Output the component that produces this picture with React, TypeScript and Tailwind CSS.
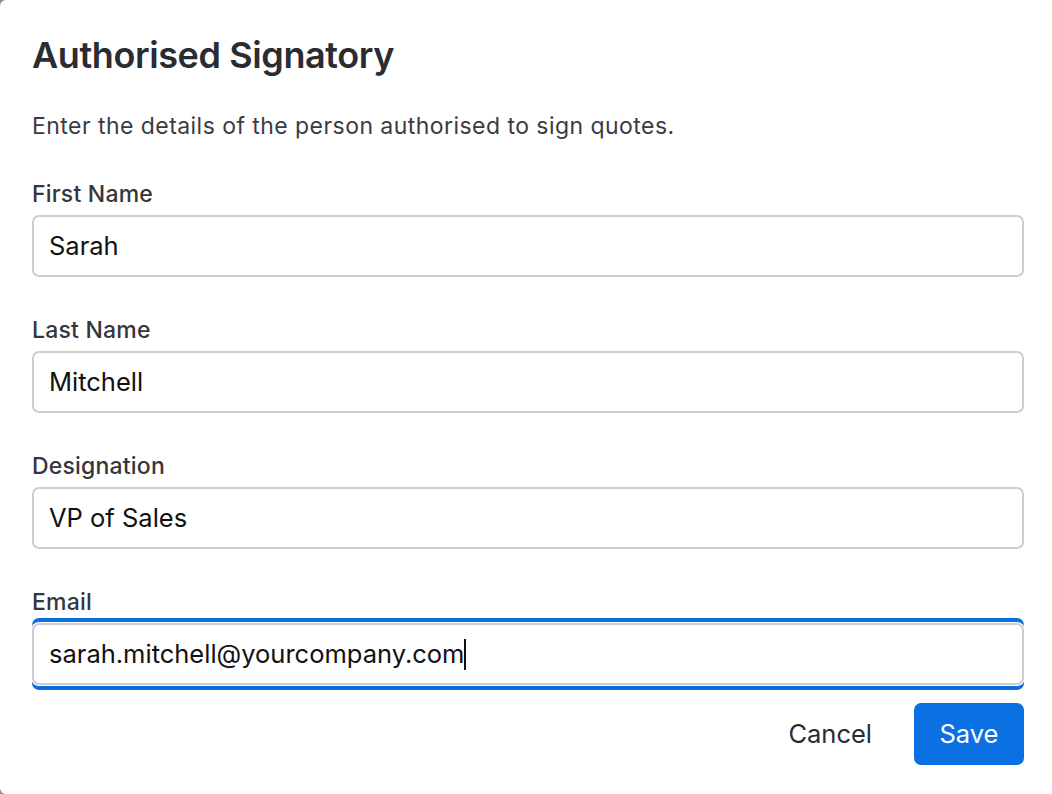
import React from 'react'

const font = { fontFamily: 'Inter, "Noto Sans", sans-serif' }

interface FieldProps {
  label: string
  value: string
  focused?: boolean
}

function Field({ label, value, focused }: FieldProps) {
  return (
    <div className="flex flex-col">
      <label className="text-[23px] leading-[28px] font-medium tracking-[0.2px] text-[#34363c] mb-[7px]">{label}</label>
      <div
        className={`h-[62px] rounded-[7px] border-2 border-[#cdced1] bg-white flex items-center pl-[15px] text-[25.5px] text-[#111] ${
          focused ? 'shadow-[0_0_0_1px_#ffffff,0_-5px_0_0_#0b6fe0,0_5px_0_0_#0b6fe0]' : ''
        }`}
      >
        <span>{value}</span>
        {focused && <span className="w-[2px] h-[31px] bg-[#111]" />}
      </div>
    </div>
  )
}

export default function App() {
  return (
    <div className="w-full h-[794px] bg-[#8e8e8e]" style={font}>
      <div className="h-full bg-white rounded-l-[6px] pl-[32px] pr-[28px] pt-[31px] flex flex-col">
        <h1 className="text-[36px] leading-[48px] font-semibold text-[#2a2c32] tracking-[-0.4px]">
          Authorised Signatory
        </h1>
        <p className="mt-[33px] text-[23px] leading-[28px] tracking-[0.45px] text-[#3a3c42]">
          Enter the details of the person authorised to sign quotes.
        </p>
        <div className="mt-[40px] flex flex-col gap-[39px]">
          <Field label="First Name" value="Sarah" />
          <Field label="Last Name" value="Mitchell" />
          <Field label="Designation" value="VP of Sales" />
          <Field label="Email" value="sarah.mitchell@yourcompany.com" focused />
        </div>
        <div className="mt-[18px] flex justify-end items-center gap-[18px]">
          <button className="h-[62px] px-[24px] text-[25.5px] text-[#2a2c32]">Cancel</button>
          <button className="h-[62px] w-[110px] rounded-[7px] bg-[#0b71e3] text-white text-[25.5px]">Save</button>
        </div>
      </div>
    </div>
  )
}
